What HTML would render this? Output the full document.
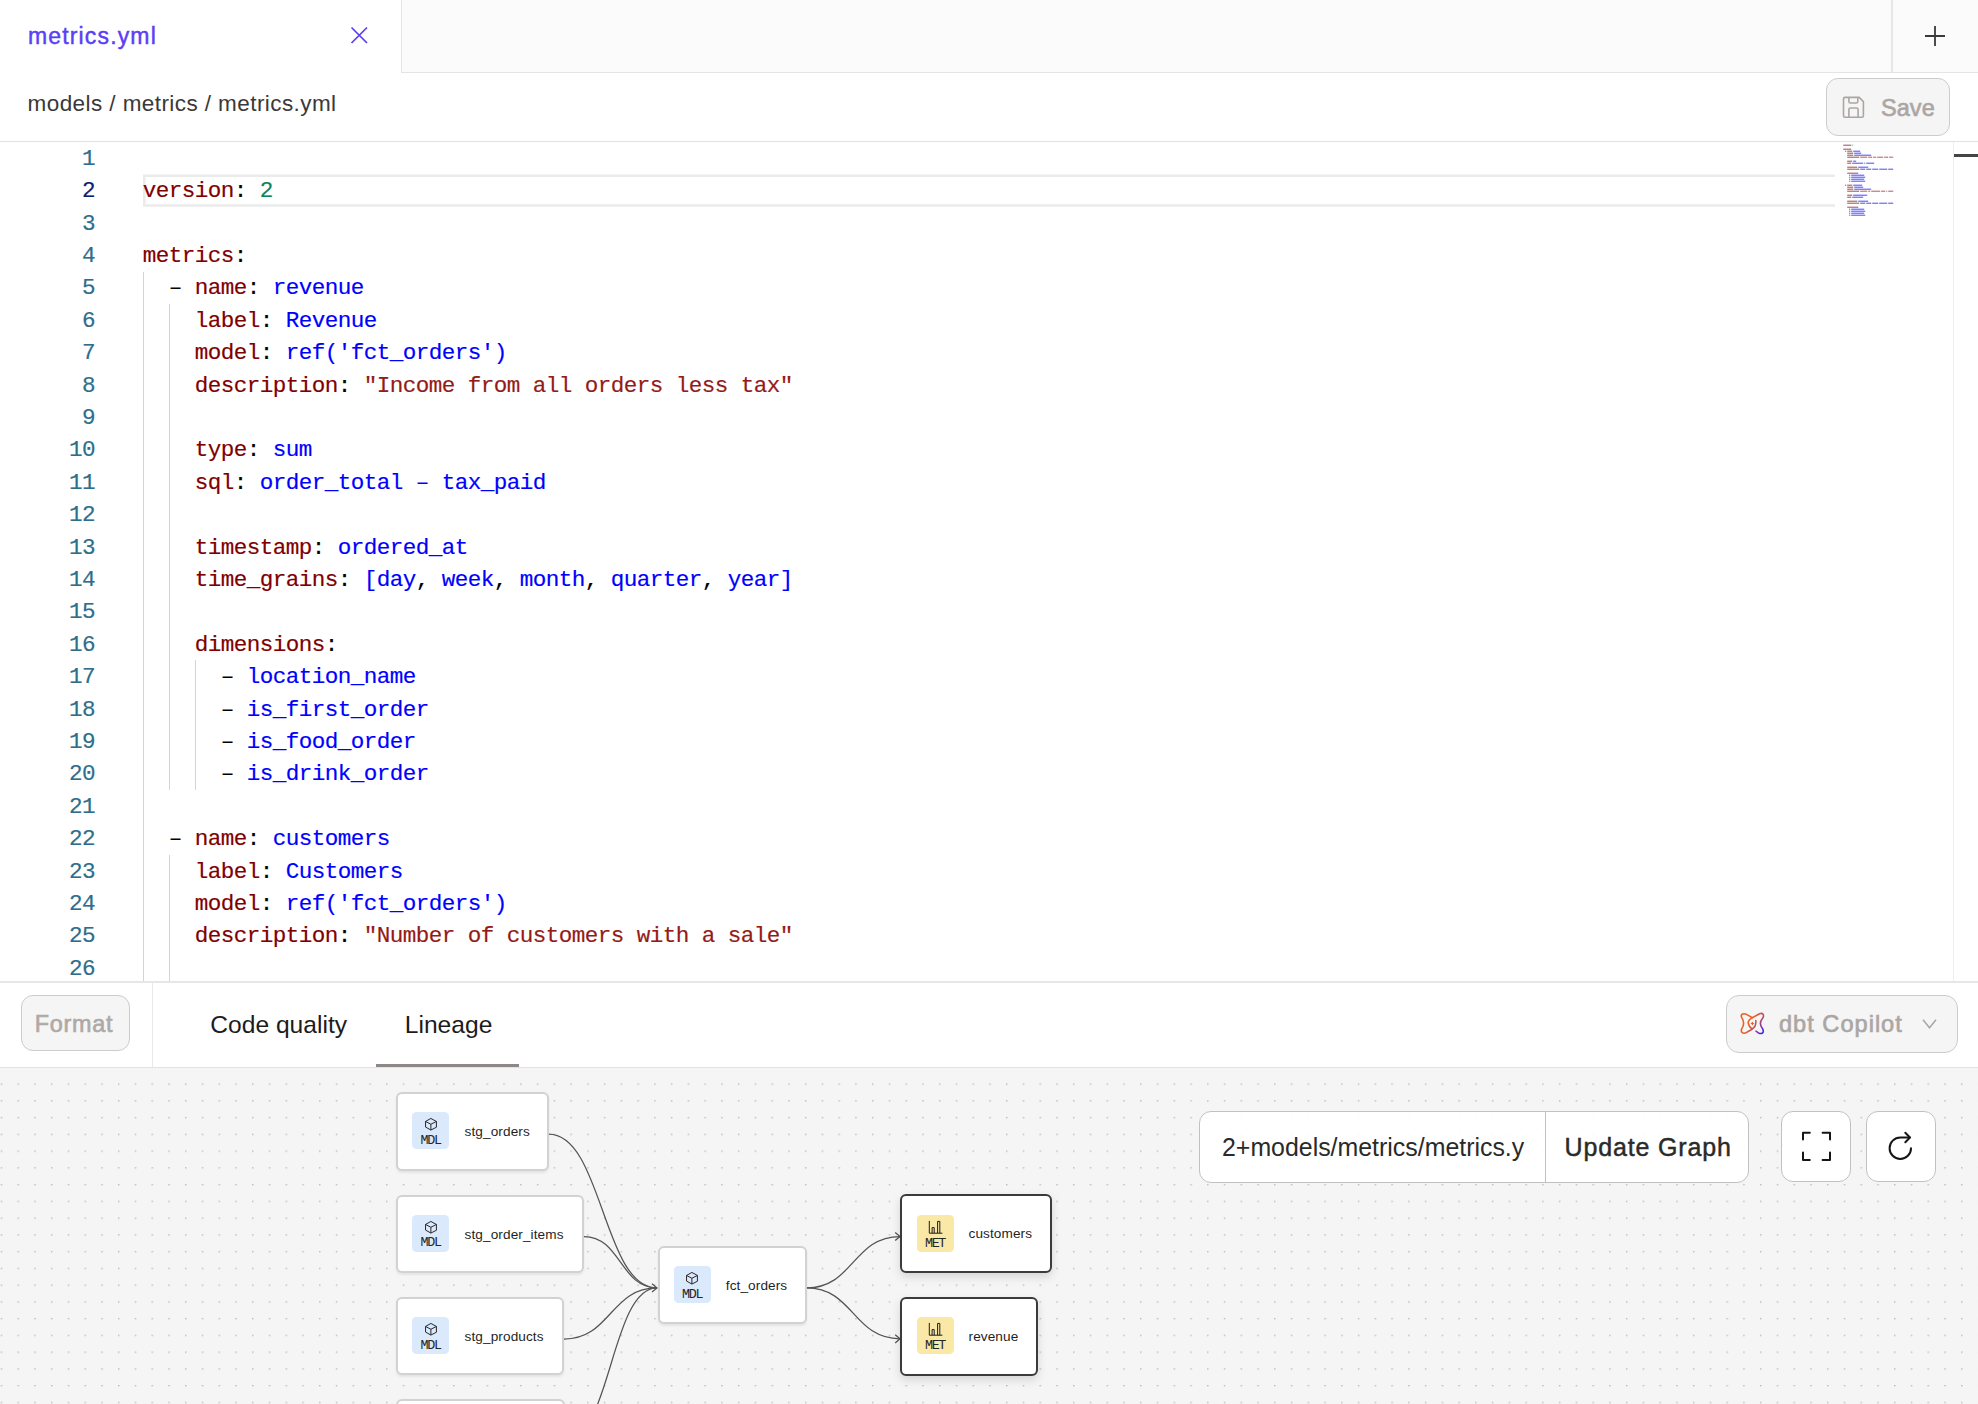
<!DOCTYPE html>
<html><head><meta charset="utf-8">
<style>
*{box-sizing:border-box;margin:0;padding:0}
html,body{width:1978px;height:1404px;overflow:hidden;background:#fff;font-family:"Liberation Sans",sans-serif}
.abs{position:absolute}
/* tab bar */
#tabbar{position:absolute;left:0;top:0;width:1978px;height:73px;background:#fbfbfb;border-bottom:1.5px solid #e4e4e4}
#tab{position:absolute;left:0;top:0;width:402px;height:73px;background:#fff;border-right:1.5px solid #e4e4e4}
#tabtitle{position:absolute;left:28px;top:25.4px;font-size:23px;line-height:23px;letter-spacing:1.15px;color:#5b3ef5;-webkit-text-stroke:0.45px #5b3ef5;white-space:pre}
#plusdiv{position:absolute;left:1891px;top:0;width:1.5px;height:72px;background:#e6e6e6}
/* breadcrumb */
#crumb{position:absolute;left:27.6px;top:93.1px;font-size:22.5px;line-height:22.5px;letter-spacing:0.42px;color:#3b3838;white-space:pre}
#crumbline{position:absolute;left:0;top:141px;width:1978px;height:1px;background:#e2e2e2}
.btn{position:absolute;background:#f5f5f5;border:1.4px solid #cfcbca;border-radius:12px}
#save{left:1826px;top:78px;width:124px;height:58px}
#savetxt{position:absolute;left:1881px;top:96.5px;font-size:23.5px;line-height:23.5px;letter-spacing:0.05px;-webkit-text-stroke:0.65px #aca6a3;color:#aca6a3;white-space:pre}
/* editor */
.ln{position:absolute;left:142.8px;height:32.4px;line-height:32.4px;font-family:"Liberation Mono",monospace;font-size:22.6px;letter-spacing:-0.56px;white-space:pre;color:#000;-webkit-text-stroke:0.18px currentColor}
.num{position:absolute;left:38px;width:57px;text-align:right;height:32.4px;line-height:32.4px;font-family:"Liberation Mono",monospace;font-size:22.6px;letter-spacing:-0.56px;white-space:pre;color:#2d6e8c;-webkit-text-stroke:0.18px currentColor}
.num.act{color:#0b216f}
.k{color:#800000}.p{color:#000}.d{color:#000}.v{color:#0000ff}.n{color:#098658}.s{color:#941b17}
.guide{position:absolute;width:1.4px;background:#d4d4d4}

#vsep{position:absolute;left:1953px;top:142px;width:1.3px;height:839px;background:#ededed}
#ruler{position:absolute;left:1954px;top:154px;width:24px;height:3px;background:#454545}
#edline{position:absolute;left:0;top:981px;width:1978px;height:1.6px;background:#e6e6e6}
/* toolbar */
#format{left:20.5px;top:995px;width:109.5px;height:56px}
#formattxt{position:absolute;left:34.8px;top:1012.5px;font-size:23.4px;line-height:23.4px;letter-spacing:0.72px;-webkit-text-stroke:0.65px #afa9a6;color:#afa9a6;white-space:pre}
#tbdiv{position:absolute;left:152px;top:982.5px;width:1.4px;height:85px;background:#e8e8e8}
.tabtxt{position:absolute;top:1012.5px;font-size:24.6px;line-height:24.6px;color:#1c1c1c;white-space:pre}
#underline{position:absolute;left:376px;top:1063.5px;width:142.5px;height:3.5px;background:#8e8886}
#copilot{left:1726px;top:995px;width:231.5px;height:57.5px;border-radius:13px}
#copilottxt{position:absolute;left:1779px;top:1013.2px;font-size:23.6px;line-height:23.6px;letter-spacing:1.0px;-webkit-text-stroke:0.65px #aca6a3;color:#aca6a3;white-space:pre}
#tbline{position:absolute;left:0;top:1066.6px;width:1978px;height:1.4px;background:#e2e2e2}
/* canvas */
#canvas{position:absolute;left:0;top:1068px;width:1978px;height:336px;background:#f5f5f5;overflow:hidden}
.node{position:absolute;background:#fff;border:2px solid #d3d1d1;border-radius:6px;box-shadow:0 1.5px 2.5px rgba(0,0,0,0.07)}
.node.met{border:2px solid #3b3b3b;box-shadow:0 4px 10px rgba(0,0,0,0.13)}
.badge{position:absolute;width:37px;height:37px;border-radius:4.5px;background:#dbe9fc}
.badge.y{background:#fae8a6}
.btxt{position:absolute;left:0px;width:37px;text-align:center;top:21.5px;font-family:"Liberation Mono",monospace;font-size:13.4px;line-height:13.4px;color:#262626;letter-spacing:-1.3px}
.ntxt{position:absolute;font-size:13.6px;line-height:13.6px;letter-spacing:0.1px;color:#1f1f1f;white-space:pre}
#inp{position:absolute;left:1199px;top:1111px;width:550px;height:71.5px;background:rgba(255,255,255,0.92);border:1.4px solid #c4c0bf;border-radius:12px}
#inpdiv{position:absolute;left:1544.5px;top:1111.5px;width:1.4px;height:70.5px;background:#c4c0bf}
#inptxt{position:absolute;left:1222px;top:1135.3px;font-size:24.9px;line-height:24.9px;color:#2a2a2a;white-space:pre}
#updtxt{position:absolute;left:1564.5px;top:1135.3px;font-size:25px;line-height:25px;letter-spacing:0.85px;-webkit-text-stroke:0.45px #2a2a2a;color:#2a2a2a;white-space:pre}
.ibtn{position:absolute;top:1111px;width:69.5px;height:71px;background:#fff;border:1.4px solid #c4c0bf;border-radius:12px}
</style></head><body>

<div id="tabbar"></div>
<div id="tab"></div>
<div id="tabtitle">metrics.yml</div>
<svg class="abs" style="left:0;top:0" width="1978" height="73">
  <path d="M351.5 27.5 L367 43 M367 27.5 L351.5 43" stroke="#5b3ef5" stroke-width="1.7" fill="none"/>
  <path d="M1935 26 V46 M1925 36 H1945" stroke="#3a3a3a" stroke-width="1.8" fill="none"/>
</svg>
<div id="plusdiv"></div>

<div id="crumb">models / metrics / metrics.yml</div>
<div class="btn" id="save"></div>
<svg class="abs" style="left:1838px;top:92px" width="32" height="32" viewBox="1838 92 32 32">
  <g stroke="#aca6a3" stroke-width="1.6" fill="none" stroke-linejoin="round">
  <path d="M1845 97.4 H1859.2 L1863.4 101.6 V115.7 Q1863.4 117.2 1861.9 117.2 H1845 Q1843.5 117.2 1843.5 115.7 V98.9 Q1843.5 97.4 1845 97.4 Z"/>
  <path d="M1848.9 97.4 V101.5 Q1848.9 103 1850.4 103 H1856.3 Q1857.8 103 1857.8 101.5 V97.4"/>
  <path d="M1848.9 117.2 V109.5 Q1848.9 108 1850.4 108 H1856.6 Q1858.1 108 1858.1 109.5 V117.2"/>
  </g>
</svg>
<div id="savetxt">Save</div>
<div id="crumbline"></div>

<!-- editor -->
<svg class="abs" style="left:0;top:150px" width="1840" height="70" viewBox="0 150 1840 70"><path d="M1835 175.7 H144.3 V205.5 H1835" stroke="#ebebeb" stroke-width="2.6" fill="none"/></svg>
<div class="guide" style="left:143px;top:271.6px;height:710px"></div>
<div class="guide" style="left:169px;top:304px;height:486px"></div>
<div class="guide" style="left:169px;top:854.8px;height:127px"></div>
<div class="guide" style="left:195px;top:660.4px;height:129.6px"></div>
<div class="num" style="top:142.70px">1</div>
<div class="num act" style="top:175.10px">2</div>
<div class="num" style="top:207.50px">3</div>
<div class="num" style="top:239.90px">4</div>
<div class="num" style="top:272.30px">5</div>
<div class="num" style="top:304.70px">6</div>
<div class="num" style="top:337.10px">7</div>
<div class="num" style="top:369.50px">8</div>
<div class="num" style="top:401.90px">9</div>
<div class="num" style="top:434.30px">10</div>
<div class="num" style="top:466.70px">11</div>
<div class="num" style="top:499.10px">12</div>
<div class="num" style="top:531.50px">13</div>
<div class="num" style="top:563.90px">14</div>
<div class="num" style="top:596.30px">15</div>
<div class="num" style="top:628.70px">16</div>
<div class="num" style="top:661.10px">17</div>
<div class="num" style="top:693.50px">18</div>
<div class="num" style="top:725.90px">19</div>
<div class="num" style="top:758.30px">20</div>
<div class="num" style="top:790.70px">21</div>
<div class="num" style="top:823.10px">22</div>
<div class="num" style="top:855.50px">23</div>
<div class="num" style="top:887.90px">24</div>
<div class="num" style="top:920.30px">25</div>
<div class="num" style="top:952.70px">26</div>
<div class="ln" style="top:142.70px"></div>
<div class="ln" style="top:175.10px"><span class="k">version</span><span class="p">: </span><span class="n">2</span></div>
<div class="ln" style="top:207.50px"></div>
<div class="ln" style="top:239.90px"><span class="k">metrics</span><span class="p">:</span></div>
<div class="ln" style="top:272.30px"><span class="d">  – </span><span class="k">name</span><span class="p">: </span><span class="v">revenue</span></div>
<div class="ln" style="top:304.70px"><span class="p">    </span><span class="k">label</span><span class="p">: </span><span class="v">Revenue</span></div>
<div class="ln" style="top:337.10px"><span class="p">    </span><span class="k">model</span><span class="p">: </span><span class="v">ref(&#x27;fct_orders&#x27;)</span></div>
<div class="ln" style="top:369.50px"><span class="p">    </span><span class="k">description</span><span class="p">: </span><span class="s">&quot;Income from all orders less tax&quot;</span></div>
<div class="ln" style="top:401.90px"></div>
<div class="ln" style="top:434.30px"><span class="p">    </span><span class="k">type</span><span class="p">: </span><span class="v">sum</span></div>
<div class="ln" style="top:466.70px"><span class="p">    </span><span class="k">sql</span><span class="p">: </span><span class="v">order_total – tax_paid</span></div>
<div class="ln" style="top:499.10px"></div>
<div class="ln" style="top:531.50px"><span class="p">    </span><span class="k">timestamp</span><span class="p">: </span><span class="v">ordered_at</span></div>
<div class="ln" style="top:563.90px"><span class="p">    </span><span class="k">time_grains</span><span class="p">: </span><span class="v">[day</span><span class="p">, </span><span class="v">week</span><span class="p">, </span><span class="v">month</span><span class="p">, </span><span class="v">quarter</span><span class="p">, </span><span class="v">year]</span></div>
<div class="ln" style="top:596.30px"></div>
<div class="ln" style="top:628.70px"><span class="p">    </span><span class="k">dimensions</span><span class="p">:</span></div>
<div class="ln" style="top:661.10px"><span class="d">      – </span><span class="v">location_name</span></div>
<div class="ln" style="top:693.50px"><span class="d">      – </span><span class="v">is_first_order</span></div>
<div class="ln" style="top:725.90px"><span class="d">      – </span><span class="v">is_food_order</span></div>
<div class="ln" style="top:758.30px"><span class="d">      – </span><span class="v">is_drink_order</span></div>
<div class="ln" style="top:790.70px"></div>
<div class="ln" style="top:823.10px"><span class="d">  – </span><span class="k">name</span><span class="p">: </span><span class="v">customers</span></div>
<div class="ln" style="top:855.50px"><span class="p">    </span><span class="k">label</span><span class="p">: </span><span class="v">Customers</span></div>
<div class="ln" style="top:887.90px"><span class="p">    </span><span class="k">model</span><span class="p">: </span><span class="v">ref(&#x27;fct_orders&#x27;)</span></div>
<div class="ln" style="top:920.30px"><span class="p">    </span><span class="k">description</span><span class="p">: </span><span class="s">&quot;Number of customers with a sale&quot;</span></div>
<div class="ln" style="top:952.70px"></div>
<svg class="abs" style="left:0;top:0" width="1978" height="240"><rect x="1843.2" y="144.6" width="7.0" height="1.3" fill="#800000" fill-opacity="0.55"/><rect x="1850.2" y="144.6" width="1.0" height="1.3" fill="#000000" fill-opacity="0.55"/><rect x="1852.2" y="144.6" width="1.0" height="1.3" fill="#098658" fill-opacity="0.55"/><rect x="1843.2" y="148.6" width="7.0" height="1.3" fill="#800000" fill-opacity="0.55"/><rect x="1850.2" y="148.6" width="1.0" height="1.3" fill="#000000" fill-opacity="0.55"/><rect x="1845.2" y="150.6" width="1.0" height="1.3" fill="#000000" fill-opacity="0.55"/><rect x="1847.2" y="150.6" width="4.0" height="1.3" fill="#800000" fill-opacity="0.55"/><rect x="1851.2" y="150.6" width="1.0" height="1.3" fill="#000000" fill-opacity="0.55"/><rect x="1853.2" y="150.6" width="7.0" height="1.3" fill="#0000ff" fill-opacity="0.55"/><rect x="1847.2" y="152.6" width="5.0" height="1.3" fill="#800000" fill-opacity="0.55"/><rect x="1852.2" y="152.6" width="1.0" height="1.3" fill="#000000" fill-opacity="0.55"/><rect x="1854.2" y="152.6" width="7.0" height="1.3" fill="#0000ff" fill-opacity="0.55"/><rect x="1847.2" y="154.6" width="5.0" height="1.3" fill="#800000" fill-opacity="0.55"/><rect x="1852.2" y="154.6" width="1.0" height="1.3" fill="#000000" fill-opacity="0.55"/><rect x="1854.2" y="154.6" width="17.0" height="1.3" fill="#0000ff" fill-opacity="0.55"/><rect x="1847.2" y="156.6" width="11.0" height="1.3" fill="#800000" fill-opacity="0.55"/><rect x="1858.2" y="156.6" width="1.0" height="1.3" fill="#000000" fill-opacity="0.55"/><rect x="1860.2" y="156.6" width="7.0" height="1.3" fill="#a31515" fill-opacity="0.55"/><rect x="1868.2" y="156.6" width="4.0" height="1.3" fill="#a31515" fill-opacity="0.55"/><rect x="1873.2" y="156.6" width="3.0" height="1.3" fill="#a31515" fill-opacity="0.55"/><rect x="1877.2" y="156.6" width="6.0" height="1.3" fill="#a31515" fill-opacity="0.55"/><rect x="1884.2" y="156.6" width="4.0" height="1.3" fill="#a31515" fill-opacity="0.55"/><rect x="1889.2" y="156.6" width="4.0" height="1.3" fill="#a31515" fill-opacity="0.55"/><rect x="1847.2" y="160.6" width="4.0" height="1.3" fill="#800000" fill-opacity="0.55"/><rect x="1851.2" y="160.6" width="1.0" height="1.3" fill="#000000" fill-opacity="0.55"/><rect x="1853.2" y="160.6" width="3.0" height="1.3" fill="#0000ff" fill-opacity="0.55"/><rect x="1847.2" y="162.6" width="3.0" height="1.3" fill="#800000" fill-opacity="0.55"/><rect x="1850.2" y="162.6" width="1.0" height="1.3" fill="#000000" fill-opacity="0.55"/><rect x="1852.2" y="162.6" width="11.0" height="1.3" fill="#0000ff" fill-opacity="0.55"/><rect x="1864.2" y="162.6" width="1.0" height="1.3" fill="#0000ff" fill-opacity="0.55"/><rect x="1866.2" y="162.6" width="8.0" height="1.3" fill="#0000ff" fill-opacity="0.55"/><rect x="1847.2" y="166.6" width="9.0" height="1.3" fill="#800000" fill-opacity="0.55"/><rect x="1856.2" y="166.6" width="1.0" height="1.3" fill="#000000" fill-opacity="0.55"/><rect x="1858.2" y="166.6" width="10.0" height="1.3" fill="#0000ff" fill-opacity="0.55"/><rect x="1847.2" y="168.6" width="11.0" height="1.3" fill="#800000" fill-opacity="0.55"/><rect x="1858.2" y="168.6" width="1.0" height="1.3" fill="#000000" fill-opacity="0.55"/><rect x="1860.2" y="168.6" width="4.0" height="1.3" fill="#0000ff" fill-opacity="0.55"/><rect x="1864.2" y="168.6" width="1.0" height="1.3" fill="#000000" fill-opacity="0.55"/><rect x="1866.2" y="168.6" width="4.0" height="1.3" fill="#0000ff" fill-opacity="0.55"/><rect x="1870.2" y="168.6" width="1.0" height="1.3" fill="#000000" fill-opacity="0.55"/><rect x="1872.2" y="168.6" width="5.0" height="1.3" fill="#0000ff" fill-opacity="0.55"/><rect x="1877.2" y="168.6" width="1.0" height="1.3" fill="#000000" fill-opacity="0.55"/><rect x="1879.2" y="168.6" width="7.0" height="1.3" fill="#0000ff" fill-opacity="0.55"/><rect x="1886.2" y="168.6" width="1.0" height="1.3" fill="#000000" fill-opacity="0.55"/><rect x="1888.2" y="168.6" width="5.0" height="1.3" fill="#0000ff" fill-opacity="0.55"/><rect x="1847.2" y="172.6" width="10.0" height="1.3" fill="#800000" fill-opacity="0.55"/><rect x="1857.2" y="172.6" width="1.0" height="1.3" fill="#000000" fill-opacity="0.55"/><rect x="1849.2" y="174.6" width="1.0" height="1.3" fill="#000000" fill-opacity="0.55"/><rect x="1851.2" y="174.6" width="13.0" height="1.3" fill="#0000ff" fill-opacity="0.55"/><rect x="1849.2" y="176.6" width="1.0" height="1.3" fill="#000000" fill-opacity="0.55"/><rect x="1851.2" y="176.6" width="14.0" height="1.3" fill="#0000ff" fill-opacity="0.55"/><rect x="1849.2" y="178.6" width="1.0" height="1.3" fill="#000000" fill-opacity="0.55"/><rect x="1851.2" y="178.6" width="13.0" height="1.3" fill="#0000ff" fill-opacity="0.55"/><rect x="1849.2" y="180.6" width="1.0" height="1.3" fill="#000000" fill-opacity="0.55"/><rect x="1851.2" y="180.6" width="14.0" height="1.3" fill="#0000ff" fill-opacity="0.55"/><rect x="1845.2" y="184.6" width="1.0" height="1.3" fill="#000000" fill-opacity="0.55"/><rect x="1847.2" y="184.6" width="4.0" height="1.3" fill="#800000" fill-opacity="0.55"/><rect x="1851.2" y="184.6" width="1.0" height="1.3" fill="#000000" fill-opacity="0.55"/><rect x="1853.2" y="184.6" width="9.0" height="1.3" fill="#0000ff" fill-opacity="0.55"/><rect x="1847.2" y="186.6" width="5.0" height="1.3" fill="#800000" fill-opacity="0.55"/><rect x="1852.2" y="186.6" width="1.0" height="1.3" fill="#000000" fill-opacity="0.55"/><rect x="1854.2" y="186.6" width="9.0" height="1.3" fill="#0000ff" fill-opacity="0.55"/><rect x="1847.2" y="188.6" width="5.0" height="1.3" fill="#800000" fill-opacity="0.55"/><rect x="1852.2" y="188.6" width="1.0" height="1.3" fill="#000000" fill-opacity="0.55"/><rect x="1854.2" y="188.6" width="17.0" height="1.3" fill="#0000ff" fill-opacity="0.55"/><rect x="1847.2" y="190.6" width="11.0" height="1.3" fill="#800000" fill-opacity="0.55"/><rect x="1858.2" y="190.6" width="1.0" height="1.3" fill="#000000" fill-opacity="0.55"/><rect x="1860.2" y="190.6" width="7.0" height="1.3" fill="#a31515" fill-opacity="0.55"/><rect x="1868.2" y="190.6" width="2.0" height="1.3" fill="#a31515" fill-opacity="0.55"/><rect x="1871.2" y="190.6" width="9.0" height="1.3" fill="#a31515" fill-opacity="0.55"/><rect x="1881.2" y="190.6" width="4.0" height="1.3" fill="#a31515" fill-opacity="0.55"/><rect x="1886.2" y="190.6" width="1.0" height="1.3" fill="#a31515" fill-opacity="0.55"/><rect x="1888.2" y="190.6" width="5.0" height="1.3" fill="#a31515" fill-opacity="0.55"/><rect x="1847.2" y="194.6" width="4.0" height="1.3" fill="#800000" fill-opacity="0.55"/><rect x="1851.2" y="194.6" width="1.0" height="1.3" fill="#000000" fill-opacity="0.55"/><rect x="1853.2" y="194.6" width="14.0" height="1.3" fill="#0000ff" fill-opacity="0.55"/><rect x="1847.2" y="196.6" width="3.0" height="1.3" fill="#800000" fill-opacity="0.55"/><rect x="1850.2" y="196.6" width="1.0" height="1.3" fill="#000000" fill-opacity="0.55"/><rect x="1852.2" y="196.6" width="11.0" height="1.3" fill="#0000ff" fill-opacity="0.55"/><rect x="1847.2" y="200.6" width="9.0" height="1.3" fill="#800000" fill-opacity="0.55"/><rect x="1856.2" y="200.6" width="1.0" height="1.3" fill="#000000" fill-opacity="0.55"/><rect x="1858.2" y="200.6" width="10.0" height="1.3" fill="#0000ff" fill-opacity="0.55"/><rect x="1847.2" y="202.6" width="11.0" height="1.3" fill="#800000" fill-opacity="0.55"/><rect x="1858.2" y="202.6" width="1.0" height="1.3" fill="#000000" fill-opacity="0.55"/><rect x="1860.2" y="202.6" width="4.0" height="1.3" fill="#0000ff" fill-opacity="0.55"/><rect x="1864.2" y="202.6" width="1.0" height="1.3" fill="#000000" fill-opacity="0.55"/><rect x="1866.2" y="202.6" width="4.0" height="1.3" fill="#0000ff" fill-opacity="0.55"/><rect x="1870.2" y="202.6" width="1.0" height="1.3" fill="#000000" fill-opacity="0.55"/><rect x="1872.2" y="202.6" width="5.0" height="1.3" fill="#0000ff" fill-opacity="0.55"/><rect x="1877.2" y="202.6" width="1.0" height="1.3" fill="#000000" fill-opacity="0.55"/><rect x="1879.2" y="202.6" width="7.0" height="1.3" fill="#0000ff" fill-opacity="0.55"/><rect x="1886.2" y="202.6" width="1.0" height="1.3" fill="#000000" fill-opacity="0.55"/><rect x="1888.2" y="202.6" width="5.0" height="1.3" fill="#0000ff" fill-opacity="0.55"/><rect x="1847.2" y="206.6" width="10.0" height="1.3" fill="#800000" fill-opacity="0.55"/><rect x="1857.2" y="206.6" width="1.0" height="1.3" fill="#000000" fill-opacity="0.55"/><rect x="1849.2" y="208.6" width="1.0" height="1.3" fill="#000000" fill-opacity="0.55"/><rect x="1851.2" y="208.6" width="13.0" height="1.3" fill="#0000ff" fill-opacity="0.55"/><rect x="1849.2" y="210.6" width="1.0" height="1.3" fill="#000000" fill-opacity="0.55"/><rect x="1851.2" y="210.6" width="14.0" height="1.3" fill="#0000ff" fill-opacity="0.55"/><rect x="1849.2" y="212.6" width="1.0" height="1.3" fill="#000000" fill-opacity="0.55"/><rect x="1851.2" y="212.6" width="13.0" height="1.3" fill="#0000ff" fill-opacity="0.55"/><rect x="1849.2" y="214.6" width="1.0" height="1.3" fill="#000000" fill-opacity="0.55"/><rect x="1851.2" y="214.6" width="14.0" height="1.3" fill="#0000ff" fill-opacity="0.55"/></svg>
<div id="vsep"></div>
<div id="ruler"></div>
<div id="edline"></div>

<!-- toolbar -->
<div class="btn" id="format"></div>
<div id="formattxt">Format</div>
<div id="tbdiv"></div>
<div class="tabtxt" style="left:210.3px">Code quality</div>
<div class="tabtxt" style="left:404.8px">Lineage</div>
<div id="underline"></div>
<div class="btn" id="copilot"></div>
<svg class="abs" style="left:1736px;top:1008px" width="32" height="32" viewBox="0 0 32 32">
  <defs><linearGradient id="cg" gradientUnits="userSpaceOnUse" x1="15" y1="13" x2="28" y2="22"><stop offset="0" stop-color="#ea5f22"/><stop offset="0.4" stop-color="#c04f60"/><stop offset="1" stop-color="#4a1ff0"/></linearGradient></defs>
  <g stroke="url(#cg)" stroke-width="1.6" fill="none" stroke-linecap="round" stroke-linejoin="round">
  <path d="M16.4 9.6 L10.9 6.6 Q8.3 5 6 6.2 Q4.6 7.6 5.8 9.6 Q9.4 15.3 5.8 20.6 Q4.6 23 6.2 24.6 Q8 25.8 10.2 24.6 L16 21.2"/>
  <path d="M16.4 9.6 Q11.5 12.3 12.3 15.5 Q13 18.7 16 21 Q20.6 18.5 19.8 12.6"/>
  <path d="M16.4 9.6 L23.6 5.8 Q26 4.8 27.2 6.5 Q28 8.2 26.6 10.2 Q22.2 15.3 26.6 20.8 Q28 23.4 26.6 25 Q24.6 26.2 22.4 24.8 L20 23.2"/>
  </g>
  <path d="M16.4 13.4 L17.1 14.8 L18.5 15.5 L17.1 16.2 L16.4 17.6 L15.7 16.2 L14.3 15.5 L15.7 14.8 Z" fill="#e35d2c"/>
</svg>
<div id="copilottxt">dbt Copilot</div>
<svg class="abs" style="left:1920px;top:1016px" width="20" height="16" viewBox="1920 1016 20 16">
  <path d="M1923 1019.8 L1929.5 1027.8 L1936 1019.8" stroke="#aca6a3" stroke-width="1.5" fill="none"/>
</svg>
<div id="tbline"></div>

<!-- canvas -->
<div id="canvas">
<svg class="abs" style="left:0;top:0" width="1978" height="336" viewBox="0 1068 1978 336">
  <defs>
    <pattern id="dots" x="1.5" y="1084.2" width="16.755" height="16.755" patternUnits="userSpaceOnUse">
      <circle cx="0.8" cy="0.8" r="0.75" fill="#aaaaaa"/>
    </pattern>
  </defs>
  <rect x="0" y="1070" width="1978" height="336" fill="url(#dots)" transform="translate(-0.8,-0.8)"/>
</svg>
</div>
<svg class="abs" style="left:0;top:0" width="1978" height="1404" viewBox="0 0 1978 1404">
  <g stroke="#545454" stroke-width="1.25" fill="none">
    <path d="M548.5 1134.2 C602.75 1134.2 602.75 1287.9 657 1287.9"/>
    <path d="M584 1236.5 C620.5 1236.5 620.5 1287.9 657 1287.9"/>
    <path d="M564 1339.1 C610.5 1339.1 610.5 1287.9 657 1287.9"/>
    <path d="M564.7 1441 C610.85 1441 610.85 1287.9 657 1287.9"/>
    <path d="M806.7 1287.9 C853.35 1287.9 853.35 1236.5 900 1236.5"/>
    <path d="M806.7 1287.9 C853.35 1287.9 853.35 1338.8 900 1338.8"/>
    <path d="M652 1283.7 L657 1287.9 L652 1292.1"/>
    <path d="M895.2 1232.4 L900 1236.5 L895.2 1240.6"/>
    <path d="M895.2 1334.7 L900 1338.8 L895.2 1342.9"/>
  </g>
</svg>

<div class="node" style="left:396px;top:1092px;width:153px;height:78.5px"></div>
<div class="node" style="left:396px;top:1194.5px;width:188px;height:78.5px"></div>
<div class="node" style="left:396px;top:1297px;width:168px;height:78px"></div>
<div class="node" style="left:396px;top:1399px;width:169px;height:78px"></div>
<div class="node" style="left:658px;top:1246px;width:149px;height:78px"></div>
<div class="node met" style="left:900px;top:1194px;width:152px;height:79px"></div>
<div class="node met" style="left:900px;top:1296.5px;width:138px;height:79px"></div>

<div class="badge" style="left:412.2px;top:1112.4px"><svg class="abs" style="left:11.6px;top:4.9px" width="14.5" height="14.5" viewBox="0 0 16 16"><g stroke="#1e1e1e" stroke-width="1.05" fill="none" stroke-linejoin="round"><path d="M7.6 1.6 L13.7 4.9 V11.3 L7.6 14.4 L1.7 11.1 V4.9 Z"/><path d="M1.7 4.9 L7.6 8 L13.7 4.9 M7.6 8 V14.4"/></g></svg><div class="btxt">MDL</div></div>
<div class="ntxt" style="left:464.6px;top:1125.39px">stg_orders</div>
<div class="badge" style="left:412.2px;top:1214.8px"><svg class="abs" style="left:11.6px;top:4.9px" width="14.5" height="14.5" viewBox="0 0 16 16"><g stroke="#1e1e1e" stroke-width="1.05" fill="none" stroke-linejoin="round"><path d="M7.6 1.6 L13.7 4.9 V11.3 L7.6 14.4 L1.7 11.1 V4.9 Z"/><path d="M1.7 4.9 L7.6 8 L13.7 4.9 M7.6 8 V14.4"/></g></svg><div class="btxt">MDL</div></div>
<div class="ntxt" style="left:464.6px;top:1227.79px">stg_order_items</div>
<div class="badge" style="left:412.2px;top:1317.4px"><svg class="abs" style="left:11.6px;top:4.9px" width="14.5" height="14.5" viewBox="0 0 16 16"><g stroke="#1e1e1e" stroke-width="1.05" fill="none" stroke-linejoin="round"><path d="M7.6 1.6 L13.7 4.9 V11.3 L7.6 14.4 L1.7 11.1 V4.9 Z"/><path d="M1.7 4.9 L7.6 8 L13.7 4.9 M7.6 8 V14.4"/></g></svg><div class="btxt">MDL</div></div>
<div class="ntxt" style="left:464.6px;top:1330.39px">stg_products</div>
<div class="badge" style="left:412.2px;top:1419.3px"><svg class="abs" style="left:11.6px;top:4.9px" width="14.5" height="14.5" viewBox="0 0 16 16"><g stroke="#1e1e1e" stroke-width="1.05" fill="none" stroke-linejoin="round"><path d="M7.6 1.6 L13.7 4.9 V11.3 L7.6 14.4 L1.7 11.1 V4.9 Z"/><path d="M1.7 4.9 L7.6 8 L13.7 4.9 M7.6 8 V14.4"/></g></svg><div class="btxt">MDL</div></div>
<div class="badge" style="left:673.6px;top:1266.1px"><svg class="abs" style="left:11.6px;top:4.9px" width="14.5" height="14.5" viewBox="0 0 16 16"><g stroke="#1e1e1e" stroke-width="1.05" fill="none" stroke-linejoin="round"><path d="M7.6 1.6 L13.7 4.9 V11.3 L7.6 14.4 L1.7 11.1 V4.9 Z"/><path d="M1.7 4.9 L7.6 8 L13.7 4.9 M7.6 8 V14.4"/></g></svg><div class="btxt">MDL</div></div>
<div class="ntxt" style="left:725.8px;top:1279.39px">fct_orders</div>
<div class="badge y" style="left:916.5px;top:1215.0px"><svg class="abs" style="left:10px;top:4px" width="18" height="16" viewBox="0 0 18 16"><g stroke="#1e1e1e" stroke-width="1.0" fill="none"><path d="M2.3 1.9 V14.2 H15.4"/><path d="M5.1 14.2 V8.6 H7.2 V14.2"/><path d="M10.6 14.2 V2.4 H12.8 V14.2"/></g></svg><div class="btxt">MET</div></div>
<div class="ntxt" style="left:968.5px;top:1227.39px">customers</div>
<div class="badge y" style="left:916.5px;top:1317.4px"><svg class="abs" style="left:10px;top:4px" width="18" height="16" viewBox="0 0 18 16"><g stroke="#1e1e1e" stroke-width="1.0" fill="none"><path d="M2.3 1.9 V14.2 H15.4"/><path d="M5.1 14.2 V8.6 H7.2 V14.2"/><path d="M10.6 14.2 V2.4 H12.8 V14.2"/></g></svg><div class="btxt">MET</div></div>
<div class="ntxt" style="left:968.5px;top:1329.79px">revenue</div>

<div id="inp"></div>
<div id="inpdiv"></div>
<div id="inptxt">2+models/metrics/metrics.y</div>
<div id="updtxt">Update Graph</div>
<div class="ibtn" style="left:1781px"></div>
<div class="ibtn" style="left:1866.3px"></div>
<svg class="abs" style="left:0;top:1100px" width="1978" height="100" viewBox="0 1100 1978 100">
  <g stroke="#151515" stroke-width="2" fill="none" stroke-linecap="round" stroke-linejoin="round">
    <path d="M1803 1139.5 V1132.7 H1809.8 M1822.6 1132.7 H1830 V1139.5 M1830 1152.6 V1160 H1822.6 M1809.8 1160 H1803 V1152.6"/>
    <path d="M1911 1148.2 A10.7 10.7 0 1 1 1900.3 1137.5 H1909.6"/>
    <path d="M1905.3 1132.8 L1910 1137.5 L1905.3 1142.2"/>
  </g>
</svg>
</body></html>
